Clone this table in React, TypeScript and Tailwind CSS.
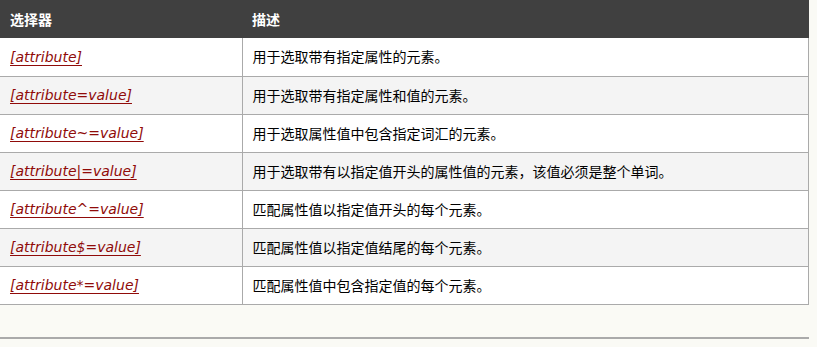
const rows: [string, string][] = [
  ["[attribute]", "用于选取带有指定属性的元素。"],
  ["[attribute=value]", "用于选取带有指定属性和值的元素。"],
  ["[attribute~=value]", "用于选取属性值中包含指定词汇的元素。"],
  ["[attribute|=value]", "用于选取带有以指定值开头的属性值的元素，该值必须是整个单词。"],
  ["[attribute^=value]", "匹配属性值以指定值开头的每个元素。"],
  ["[attribute$=value]", "匹配属性值以指定值结尾的每个元素。"],
  ["[attribute*=value]", "匹配属性值中包含指定值的每个元素。"],
];

export default function App() {
  return (
    <div className="w-[817px] h-[347px] bg-[#fafaf5] overflow-hidden font-['Noto_Sans_CJK_SC',sans-serif] text-[14px] text-black">
      <table className="w-[809px] border-collapse table-fixed">
        <thead>
          <tr className="bg-[#404040] h-[38px]">
            <th className="w-[242px] text-left font-bold text-white px-[10px] py-0">选择器</th>
            <th className="text-left font-bold text-white px-[10px] py-0">描述</th>
          </tr>
        </thead>
        <tbody>
          {rows.map(([sel, desc], i) => (
            <tr key={i} className={i % 2 === 1 ? "bg-[#f4f4f4] h-[38px]" : "bg-white h-[38px]"}>
              <td className="border-b border-r border-[#aaaaaa] px-[10px] py-0">
                <a
                  href="#"
                  className="text-[#900b09] italic underline underline-offset-[3px] font-['DejaVu_Sans',sans-serif] text-[14px]"
                >
                  {sel}
                </a>
              </td>
              <td className="border-b border-r border-[#aaaaaa] px-[10px] py-0 text-[14px]">{desc}</td>
            </tr>
          ))}
        </tbody>
      </table>
      <div className="mt-[32px] w-[809px] h-[2px] bg-[#aaaaaa]" />
    </div>
  );
}
